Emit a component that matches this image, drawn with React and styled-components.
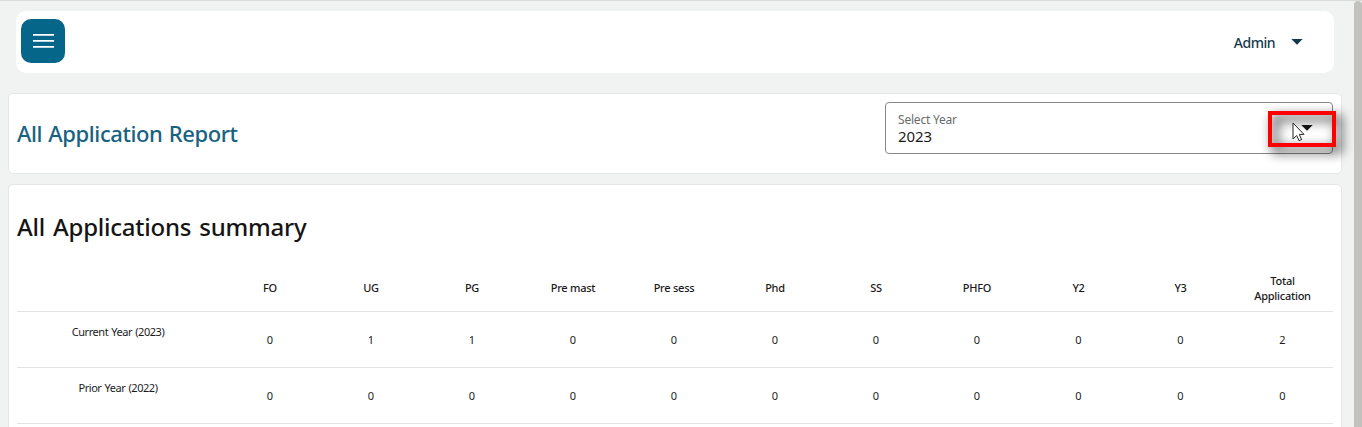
import React from 'react';
import styled, { createGlobalStyle } from 'styled-components';

const GlobalStyle = createGlobalStyle`
  * { box-sizing: border-box; }
  body {
    margin: 0;
    overflow: hidden;
    font-family: "Noto Sans", "Open Sans", sans-serif;
    background: #f1f3f3;
    color: #1b1b1b;
  }
`;

const Page = styled.div`
  display: flex;
  height: 427px;
  overflow: hidden;
  border-top: 1px solid #d9dada;
`;

const Main = styled.main`
  flex: 1;
  display: flex;
  flex-direction: column;
  padding: 10px 12px 0 8px;
`;

const ScrollThumb = styled.div`
  width: 8px;
  border-radius: 4px 4px 0 0;
  background: #c2c1be;
`;

const TopBar = styled.header`
  display: flex;
  align-items: center;
  justify-content: space-between;
  flex: none;
  height: 62px;
  margin: 0 8px 20px;
  padding: 0 31px 2px 5px;
  border-radius: 10px;
  background: #fff;
`;

const MenuButton = styled.button`
  display: grid;
  place-items: center;
  width: 44px;
  height: 44px;
  padding: 0;
  border: 0;
  border-radius: 10px;
  background: #066689;
`;

const UserMenu = styled.div`
  display: flex;
  align-items: center;
  gap: 16px;
  padding-top: 2px;
  color: #17394a;
`;

const UserName = styled.span`
  padding-top: 2px;
  font-size: 14px;
  line-height: 20px;
  font-weight: 500;
  letter-spacing: -0.5px;
`;

const Card = styled.section`
  flex: none;
  border: 1px solid #e5e6e6;
  border-radius: 5px;
  background: #fff;
  padding: 0 8px;
`;

const ReportCard = styled(Card)`
  display: flex;
  justify-content: space-between;
  height: 81px;
  margin-bottom: 10px;
`;

const SummaryCard = styled(Card)`
  height: 300px;
`;

const ReportTitle = styled.h1`
  margin: 0;
  padding-top: 24px;
  font-size: 22px;
  line-height: 30px;
  font-weight: 500;
  letter-spacing: -0.41px;
  word-spacing: 1px;
  color: #186281;
  white-space: nowrap;
`;

const SummaryTitle = styled.h2`
  margin: 0;
  padding-top: 25px;
  height: 80px;
  font-size: 24px;
  line-height: 34px;
  font-weight: 500;
  letter-spacing: -0.23px;
  word-spacing: 2px;
  color: #151515;
  white-space: nowrap;
`;

const YearSelect = styled.div`
  position: relative;
  display: flex;
  justify-content: space-between;
  width: 448px;
  height: 52px;
  margin-top: 8px;
  padding: 9px 19px 0 12px;
  border: 1px solid #85878a;
  border-radius: 4px;
`;

const SelectText = styled.div`
  display: flex;
  flex-direction: column;
`;

const SelectLabel = styled.span`
  font-size: 12px;
  line-height: 16px;
  letter-spacing: -0.2px;
  color: #696b6b;
`;

const SelectValue = styled.span`
  font-size: 15px;
  line-height: 16px;
  letter-spacing: -0.1px;
`;

const SelectArrow = styled.div`
  display: flex;
  padding-top: 13px;
`;

const Highlight = styled.div`
  position: absolute;
  top: 8px;
  right: -4px;
  width: 68px;
  height: 36px;
  border: 4px solid #fe0000;
  filter: drop-shadow(5px 5px 6px rgba(0, 0, 0, 1));
`;

const Pointer = styled.svg`
  position: absolute;
  top: 19px;
  right: 27px;
`;

const Grid = styled.div`
  display: grid;
  grid-template-columns: 202px repeat(8, 101px) repeat(3, 102px);
  align-items: center;
  height: ${(p) => p.$height}px;
  border-bottom: 1px solid #e3e3e3;
  text-align: center;
  font-size: 11px;
  line-height: 15px;
`;

const HeadCell = styled.div`
  font-weight: 500;
  letter-spacing: -0.25px;
  padding: ${(p) => (p.$wide ? '0 20px 0 21px' : '0 0 2px 1px')};
`;

const RowLabel = styled.div`
  padding-bottom: 17px;
  letter-spacing: -0.45px;
  word-spacing: 0.7px;
`;

const ValueCell = styled.div`
  padding-left: 1px;
`;

const columns = ['FO', 'UG', 'PG', 'Pre mast', 'Pre sess', 'Phd', 'SS', 'PHFO', 'Y2', 'Y3', 'Total Application'];
const rows = [
  { label: 'Current Year (2023)', values: [0, 1, 1, 0, 0, 0, 0, 0, 0, 0, 2] },
  { label: 'Prior Year (2022)', values: [0, 0, 0, 0, 0, 0, 0, 0, 0, 0, 0] },
];

const Caret = ({ color }) => (
  <svg width="12" height="6" viewBox="0 0 12 6">
    <path d="M0.3 0H11.7L6 5.8Z" fill={color} />
  </svg>
);

export default function App() {
  return (
    <>
      <GlobalStyle />
      <Page>
        <Main>
          <TopBar>
            <MenuButton aria-label="Menu">
              <svg width="21" height="14" viewBox="0 0 21 14" fill="#fff">
                <path d="M0 0H21V1.8H0ZM0 6H21V7.8H0ZM0 12H21V13.8H0Z" />
              </svg>
            </MenuButton>
            <UserMenu>
              <UserName>Admin</UserName>
              <Caret color="#123a4c" />
            </UserMenu>
          </TopBar>
          <ReportCard>
            <ReportTitle>All Application Report</ReportTitle>
            <YearSelect>
              <SelectText>
                <SelectLabel>Select Year</SelectLabel>
                <SelectValue>2023</SelectValue>
              </SelectText>
              <SelectArrow>
                <Caret color="#151515" />
              </SelectArrow>
              <Highlight />
              <Pointer width="13" height="20" viewBox="0 0 13 20">
                <path
                  d="M1 1V17L4.7 13.5L7 18.7L9.6 17.6L7.3 12.4H12Z"
                  fill="#fff"
                  stroke="#25252d"
                  strokeWidth="1"
                />
              </Pointer>
            </YearSelect>
          </ReportCard>
          <SummaryCard>
            <SummaryTitle>All Applications summary</SummaryTitle>
            <Grid $height={47}>
              <div />
              {columns.map((name, i) => (
                <HeadCell key={name} $wide={i === 10}>{name}</HeadCell>
              ))}
            </Grid>
            {rows.map((row) => (
              <Grid key={row.label} $height={56}>
                <RowLabel>{row.label}</RowLabel>
                {row.values.map((value, i) => (
                  <ValueCell key={columns[i]}>{value}</ValueCell>
                ))}
              </Grid>
            ))}
          </SummaryCard>
        </Main>
        <ScrollThumb />
      </Page>
    </>
  );
}
